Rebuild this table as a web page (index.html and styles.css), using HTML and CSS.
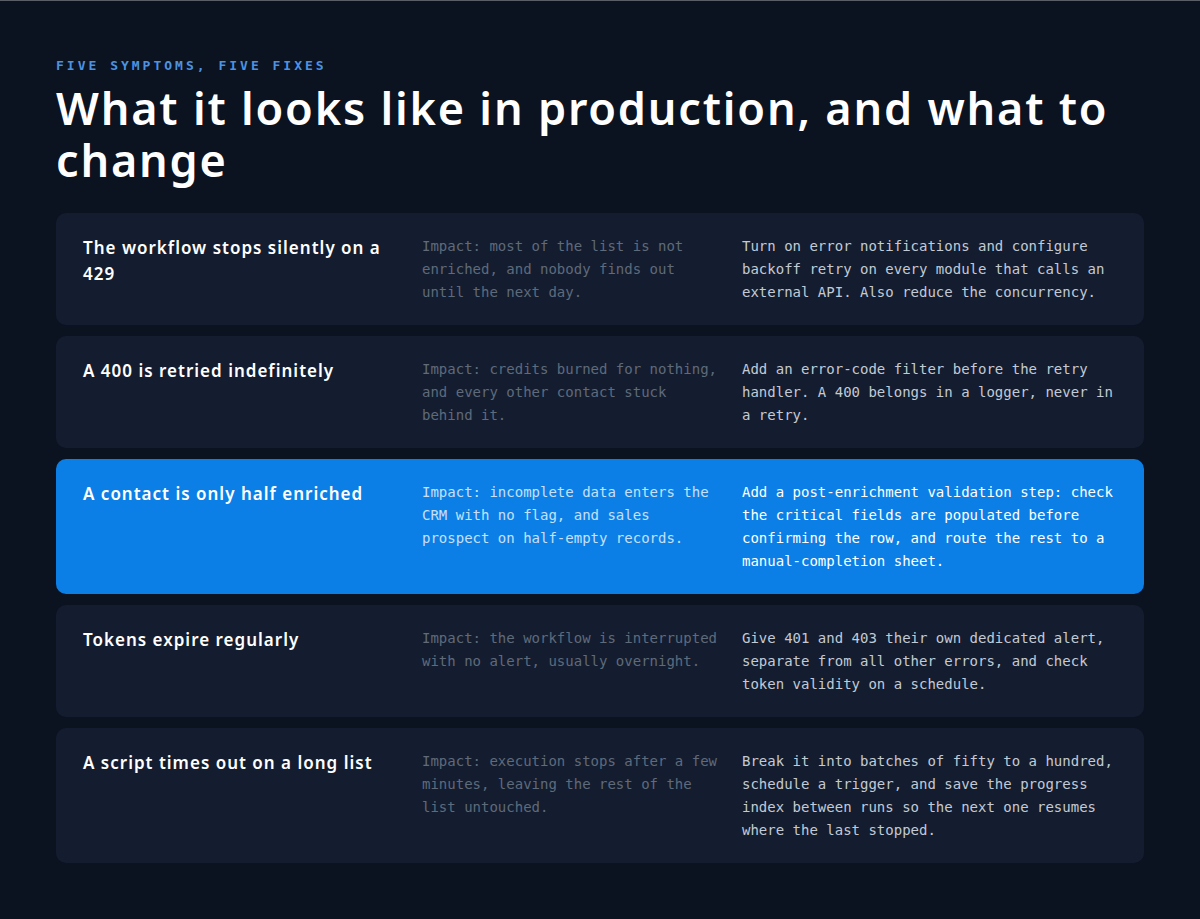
FILE: index.html
```html
<!DOCTYPE html>
<html lang="en">
<head>
<meta charset="utf-8">
<title>Five symptoms, five fixes</title>
<link rel="stylesheet" href="styles.css">
</head>
<body>
<main class="page">
  <p class="eyebrow">FIVE SYMPTOMS, FIVE FIXES</p>
  <h1 class="title">What it looks like in production, and what to change</h1>
  <section class="rows">
    <article class="row">
      <h2 class="symptom">The workflow stops silently on a 429</h2>
      <p class="impact">Impact: most of the list is not enriched, and nobody finds out until the next day.</p>
      <p class="fix">Turn on error notifications and configure backoff retry on every module that calls an external API. Also reduce the concurrency.</p>
    </article>
    <article class="row">
      <h2 class="symptom">A 400 is retried indefinitely</h2>
      <p class="impact">Impact: credits burned for nothing, and every other contact stuck behind it.</p>
      <p class="fix">Add an error-code filter before the retry handler. A 400 belongs in a logger, never in a retry.</p>
    </article>
    <article class="row row-active">
      <h2 class="symptom">A contact is only half enriched</h2>
      <p class="impact">Impact: incomplete data enters the CRM with no flag, and sales prospect on half-empty records.</p>
      <p class="fix">Add a post-enrichment validation step: check the critical fields are populated before confirming the row, and route the rest to a manual-completion sheet.</p>
    </article>
    <article class="row">
      <h2 class="symptom">Tokens expire regularly</h2>
      <p class="impact">Impact: the workflow is interrupted with no alert, usually overnight.</p>
      <p class="fix">Give 401 and 403 their own dedicated alert, separate from all other errors, and check token validity on a schedule.</p>
    </article>
    <article class="row">
      <h2 class="symptom">A script times out on a long list</h2>
      <p class="impact">Impact: execution stops after a few minutes, leaving the rest of the list untouched.</p>
      <p class="fix">Break it into batches of fifty to a hundred, schedule a trigger, and save the progress index between runs so the next one resumes where the last stopped.</p>
    </article>
  </section>
</main>
</body>
</html>
```
FILE: styles.css
```css
html, body {
  margin: 0;
  padding: 0;
}
body {
  background: #0b1220;
  border-top: 1px solid #5a5e66;
  min-height: 918px;
  font-family: "Noto Sans", "DejaVu Sans", sans-serif;
  color: #ffffff;
}
.page {
  padding: 55px 56px 40px 56px;
}
.eyebrow {
  margin: 0;
  font-family: "DejaVu Sans Mono", "Liberation Mono", monospace;
  font-size: 13px;
  font-weight: bold;
  letter-spacing: 3px;
  color: #4b93e0;
  line-height: 20px;
}
.title {
  margin: 6px 0 0 0;
  font-family: "Noto Sans", "DejaVu Sans", sans-serif;
  font-size: 45px;
  font-weight: 600;
  line-height: 52px;
  letter-spacing: 1.8px;
  color: #ffffff;
}
.rows {
  margin-top: 27px;
  display: flex;
  flex-direction: column;
  gap: 11px;
}
.row {
  background: #131d2f;
  border-radius: 10px;
  padding: 22px 27px 21px 27px;
  display: grid;
  grid-template-columns: 339px 320px 1fr;
  min-height: 68px;
}
.row-active {
  background: #0b7fe5;
}
.symptom {
  margin: 0;
  padding-right: 24px;
  font-family: "Noto Sans", "DejaVu Sans", sans-serif;
  font-size: 17px;
  font-weight: 600;
  line-height: 26px;
  letter-spacing: 1px;
  color: #ffffff;
}
.impact, .fix {
  margin: 0;
  font-family: "DejaVu Sans Mono", "Liberation Mono", monospace;
  font-size: 14px;
  line-height: 23px;
}
.impact {
  padding-right: 20px;
  color: #5f6a7b;
}
.fix {
  color: #c3cad5;
}
.row-active .impact {
  color: #c7e0fa;
}
.row-active .fix {
  color: #ffffff;
}
```
